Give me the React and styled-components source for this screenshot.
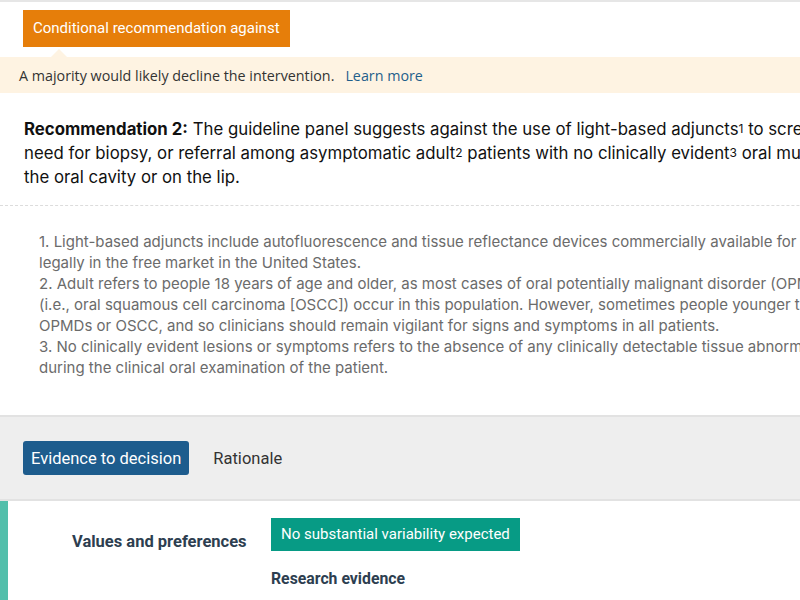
import React from "react";
import styled, { createGlobalStyle } from "styled-components";

const GlobalStyle = createGlobalStyle`
  html, body {
    margin: 0;
    padding: 0;
    background: #ffffff;
    overflow: hidden;
  }
  body {
    font-family: Roboto, "Liberation Sans", sans-serif;
    color: #222;
  }
`;

const Page = styled.div`
  width: 1100px;
  border-top: 2px solid #e6e6e6;
`;

const Header = styled.div`
  padding-top: 8px;
`;

const StrengthBadge = styled.div`
  display: inline-block;
  margin-left: 23px;
  background: #e67e0a;
  color: #fff;
  font-size: 15px;
  line-height: 37px;
  padding: 0 10px;
  position: relative;
  &::after {
    content: "";
    position: absolute;
    left: 28px;
    bottom: -10px;
    border-left: 8px solid transparent;
    border-right: 8px solid transparent;
    border-bottom: 8px solid #fef3e2;
  }
`;

const Explain = styled.div`
  margin-top: 10px;
  background: #fef3e2;
  height: 36px;
  display: flex;
  align-items: center;
  padding-left: 19px;
  font-family: "Open Sans", Roboto, sans-serif;
  font-size: 14.3px;
  color: #333;
`;

const LearnMore = styled.a`
  margin-left: 11px;
  color: #1f5f8b;
  text-decoration: none;
`;

const Statement = styled.p`
  margin: 0;
  padding: 25px 24px 16px;
  font-family: Inter, Roboto, sans-serif;
  font-size: 16.8px;
  line-height: 23px;
  color: #111;
  white-space: nowrap;
  border-bottom: 1px dashed #dcdcdc;
  b {
    font-weight: 700;
  }
`;

const Sup = styled.span`
  font-size: 12px;
  position: relative;
  top: -2px;
`;

const Notes = styled.ol`
  margin: 0;
  padding: 25px 24px 37px 39px;
  list-style: none;
  font-family: Inter, Roboto, sans-serif;
  font-size: 15px;
  line-height: 21px;
  color: #6b6b6b;
  white-space: nowrap;
`;

const TabBar = styled.div`
  background: #eeeeee;
  border-top: 2px solid #e2e2e2;
  border-bottom: 2px solid #e2e2e2;
  height: 82px;
  display: flex;
  align-items: center;
  padding-left: 23px;
  gap: 16px;
`;

const Tab = styled.button`
  border: none;
  font-family: Roboto, sans-serif;
  font-size: 16.5px;
  height: 34px;
  padding: 0 8px;
  border-radius: 3px;
  background: ${(p) => (p.$active ? "#1d5c8d" : "transparent")};
  color: ${(p) => (p.$active ? "#fff" : "#333")};
  cursor: pointer;
`;

const Section = styled.div`
  border-left: 8px solid #52bfab;
  display: flex;
  padding-top: 17px;
  min-height: 120px;
`;

const Label = styled.div`
  width: 263px;
  box-sizing: border-box;
  padding: 14px 0 0 64px;
  font-size: 16.5px;
  font-weight: 700;
  color: #2d3e50;
`;

const Body = styled.div`
  display: flex;
  flex-direction: column;
  align-items: flex-start;
`;

const Judgement = styled.div`
  background: #079b85;
  color: #fff;
  font-size: 15px;
  line-height: 33px;
  padding: 0 10px;
`;

const SubHead = styled.div`
  margin-top: 18px;
  font-size: 15.8px;
  font-weight: 700;
  color: #2d3e50;
`;

const Para = styled.div`
  margin-top: 10px;
  font-size: 14px;
  color: #777;
`;

export default function App() {
  return (
    <>
      <GlobalStyle />
      <Page>
        <Header>
          <StrengthBadge>Conditional recommendation against</StrengthBadge>
          <Explain>
            A majority would likely decline the intervention.
            <LearnMore href="#">Learn more</LearnMore>
          </Explain>
        </Header>
        <Statement>
          <b>Recommendation 2:</b> The guideline panel suggests against the use of light-based adjuncts<Sup>1</Sup> to screen for, determine the
          <br />
          need for biopsy, or referral among asymptomatic adult<Sup>2</Sup> patients with no clinically evident<Sup>3</Sup> oral mucosal lesions or symptoms in
          <br />
          the oral cavity or on the lip.
        </Statement>
        <Notes>
          <li>
            1. Light-based adjuncts include autofluorescence and tissue reflectance devices commercially available for use
            <br />
            legally in the free market in the United States.
          </li>
          <li>
            2. Adult refers to people 18 years of age and older, as most cases of oral potentially malignant disorder (OPMD) and oral cancer
            <br />
            (i.e., oral squamous cell carcinoma [OSCC]) occur in this population. However, sometimes people younger than 18 years develop
            <br />
            OPMDs or OSCC, and so clinicians should remain vigilant for signs and symptoms in all patients.
          </li>
          <li>
            3. No clinically evident lesions or symptoms refers to the absence of any clinically detectable tissue abnormality
            <br />
            during the clinical oral examination of the patient.
          </li>
        </Notes>
        <TabBar>
          <Tab $active>Evidence to decision</Tab>
          <Tab>Rationale</Tab>
        </TabBar>
        <Section>
          <Label>Values and preferences</Label>
          <Body>
            <Judgement>No substantial variability expected</Judgement>
            <SubHead>Research evidence</SubHead>
            <Para>Studies were not found that assessed how patients value the outcomes of screening.</Para>
          </Body>
        </Section>
      </Page>
    </>
  );
}
